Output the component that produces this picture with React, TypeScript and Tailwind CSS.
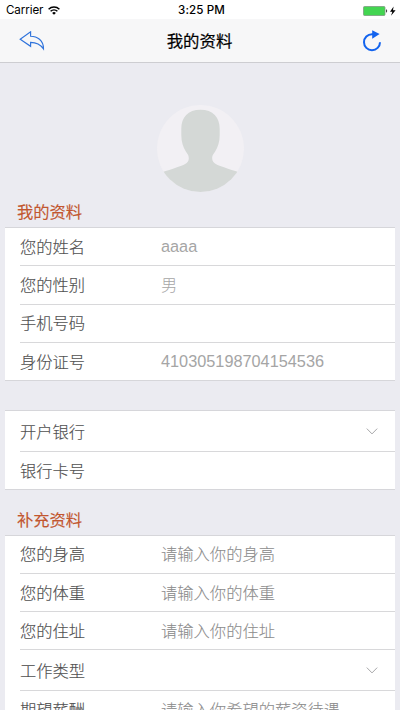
import type { ReactNode } from 'react';

import clsx from 'clsx';

type Field = {
    label: string;
    value?: string;
    placeholder?: string;
    isSelect?: boolean;
};

const PROFILE_FIELDS: Field[] = [
    { label: '您的姓名', value: 'aaaa' },
    { label: '您的性别', value: '男' },
    { label: '手机号码' },
    { label: '身份证号', value: '410305198704154536' },
];

const BANK_FIELDS: Field[] = [{ label: '开户银行', isSelect: true }, { label: '银行卡号' }];

const EXTRA_FIELDS: Field[] = [
    { label: '您的身高', placeholder: '请输入你的身高' },
    { label: '您的体重', placeholder: '请输入你的体重' },
    { label: '您的住址', placeholder: '请输入你的住址' },
    { label: '工作类型', isSelect: true },
    { label: '期望薪酬', placeholder: '请输入你希望的薪资待遇' },
];

const StatusBar = () => (
    <div className="grid h-[19px] grid-cols-3 items-center bg-white text-[11.6px] leading-[19px] text-black">
        <div className="flex items-center gap-[5px] pt-px pl-1.5 font-['Inter']">
            <span className="tracking-[-0.1px]">Carrier</span>
            <svg className="h-[9px] w-3" viewBox="0 0 12 9" fill="none" stroke="currentColor" strokeWidth="1.5">
                <path d="M.6 3.2a7.8 7.8 0 0 1 10.8 0M2.6 5.3a4.9 4.9 0 0 1 6.8 0" />
                <path d="M6 8.8 4.1 6.9a2.7 2.7 0 0 1 3.8 0Z" fill="currentColor" stroke="none" />
            </svg>
        </div>
        <div className="pt-px pl-[3px] text-center font-['Inter'] font-medium tracking-[0.1px]">3:25 PM</div>
        <div className="flex items-center justify-end pr-1 pt-px">
            <svg className="h-2.5 w-[33px]" viewBox="0 0 33 10">
                <rect x=".5" y=".5" width="21.5" height="9" rx="1" fill="#43d551" stroke="#7d9a80" strokeWidth=".8" />
                <path d="M23 3.3c1.6.3 1.6 3.1 0 3.4Z" fill="#444" />
                <path d="M30.6.4 27 5.7h2.4L28 9.7 32.6 4.3H30Z" fill="#000" />
            </svg>
        </div>
    </div>
);

const NavBar = () => (
    <header className="grid h-11 grid-cols-[1fr_auto_1fr] items-center border-b border-[#cdcdd1] bg-[#f7f7f8] pr-[18px] pl-[19px]">
        <button className="justify-self-start" aria-label="返回">
            <svg className="h-5 w-[26px]" viewBox="0 0 26 20" fill="none" stroke="#2f73dc" strokeWidth="1.15">
                <path d="M1.2 8.2 11.6.8V5.2C18 5.2 24.6 9.2 24.5 18C21.7 13.9 17 11.4 11.6 11.4V15.3Z" />
            </svg>
        </button>
        <h1 className="pt-0.5 pr-0.5 text-[16.4px] text-black [-webkit-text-stroke:0.2px]">我的资料</h1>
        <button className="justify-self-end" aria-label="刷新">
            <svg className="h-[22px] w-5" viewBox="0 0 20 22" fill="none">
                <path d="M11 4.2H10A8 8 0 1 0 18 12.2" stroke="#1263ee" strokeWidth="2" />
                <path d="M10.2.2 17.6 4.1 10.2 8.8Z" fill="#1263ee" />
            </svg>
        </button>
    </header>
);

const Avatar = () => (
    <svg className="mx-auto block h-[87px] w-[87px] rounded-full bg-[#f2f0f4]" viewBox="0 0 87 87">
        <path
            d="M43.5 4.7C31 4.7 24.3 12 24.3 24V30C24.3 37 26.2 42.5 28.7 46.2C31 50 31.8 50 31.8 53.5C31.8 58.5 26 60.5 20 62.3C14.5 64.3 10 65.7 5 67.2V87H82V67.2C77 65.7 72.5 64.3 67 62.3C61 60.5 55.2 58.5 55.2 53.5C55.2 50 56 50 58.3 46.2C60.8 42.5 62.7 37 62.7 30V24C62.7 12 56 4.7 43.5 4.7Z"
            fill="#d4d8d6"
        />
    </svg>
);

// The last row's transparent divider sits on top of the group's own bottom border
const FieldRow = ({ label, value, placeholder, isSelect }: Field) => (
    <div
        className={clsx(
            'ml-[15px] flex items-center border-b border-[#d8d8da] last:-mb-px last:border-transparent',
            isSelect ? 'h-[40.75px] pt-px' : 'h-[38.25px]'
        )}
    >
        <span className="w-[141px] shrink-0 pt-px text-[#505050] [-webkit-text-stroke:0.15px]">{label}</span>
        <span
            className={clsx(
                'grow whitespace-nowrap',
                value ? 'text-[#a5a5a5]' : 'pt-px text-[#8c8c8c] [-webkit-text-stroke:0.1px]'
            )}
        >
            {value ?? placeholder}
        </span>
        {isSelect && (
            <svg className="mr-[17px] h-[7px] w-3" viewBox="0 0 12 7" fill="none" stroke="#a6a6a8">
                <path d="M.8.6 6 5.9 11.2.6" />
            </svg>
        )}
    </div>
);

const FieldGroup = ({ fields }: { fields: Field[] }) => (
    <div className="mx-[5px] border-y border-[#d6d6da] bg-white font-light">
        {fields.map((field) => (
            <FieldRow key={field.label} {...field} />
        ))}
    </div>
);

const SectionTitle = ({ children }: { children: ReactNode }) => (
    <h2 className="pl-[17px] leading-6 text-[#c2562f] [-webkit-text-stroke:0.12px]">{children}</h2>
);

const App = () => {
    return (
        <div className="h-[710px] w-[400px] overflow-hidden bg-[#ebebf1] font-['Liberation_Sans','Noto_Sans_CJK_SC',sans-serif] text-[16.3px]">
            <StatusBar />
            <NavBar />
            <main className="pt-[42px]">
                <Avatar />
                <div className="pt-2 pb-[3px]">
                    <SectionTitle>我的资料</SectionTitle>
                </div>
                <FieldGroup fields={PROFILE_FIELDS} />
                <div className="h-[29px]" />
                <FieldGroup fields={BANK_FIELDS} />
                <div className="pt-[18px] pb-[2.5px]">
                    <SectionTitle>补充资料</SectionTitle>
                </div>
                <FieldGroup fields={EXTRA_FIELDS} />
            </main>
        </div>
    );
};

export default App;
